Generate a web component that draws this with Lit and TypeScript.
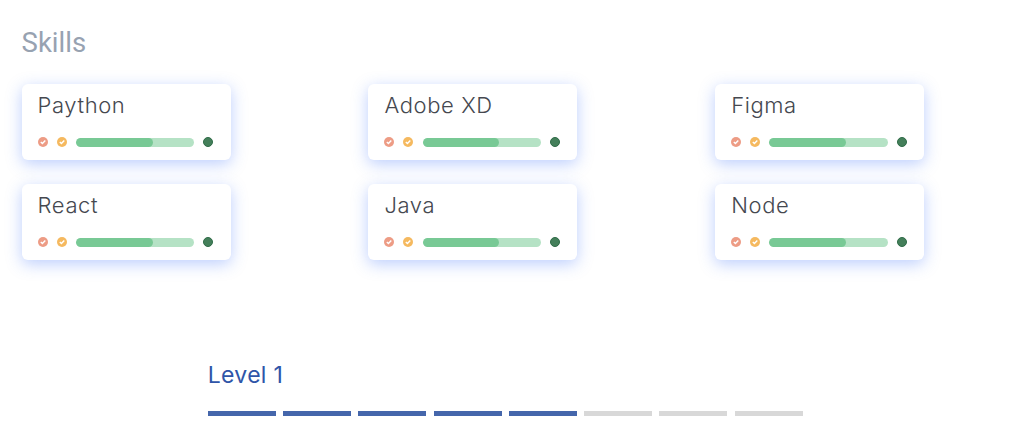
import { css, html, LitElement } from 'lit';

const SKILLS = ['Paython', 'Adobe XD', 'Figma', 'React', 'Java', 'Node'];
const SEGMENTS = [1, 1, 1, 1, 1, 0, 0, 0];

export class AppRoot extends LitElement {
  static styles = css`
    :host {
      display: block;
      height: 438px;
      overflow: hidden;
      background: #fff;
      font-family: 'Inter', 'Liberation Sans', sans-serif;
    }

    .skills {
      padding: 28px 0 0 21.6px;
    }

    .title {
      margin: 0;
      font-family: 'Roboto', sans-serif;
      font-size: 27.5px;
      font-weight: 400;
      line-height: 30px;
      color: #97a2b1;
    }

    .grid {
      display: grid;
      grid-template-columns: repeat(3, 209px);
      column-gap: 137.8px;
      row-gap: 24px;
      margin-top: 26px;
    }

    .card {
      box-sizing: border-box;
      height: 76px;
      padding: 7px 17.6px 0 16px;
      border-radius: 6px;
      background: #fff;
      box-shadow: 0 4px 16px rgba(60, 110, 250, 0.34);
    }

    .name {
      font-size: 22px;
      font-weight: 300;
      line-height: 28px;
      letter-spacing: 0.6px;
      color: #45484f;
    }

    .meter {
      display: flex;
      align-items: center;
      gap: 9px;
      margin-top: 18px;
    }

    .check {
      flex: none;
      width: 10px;
      height: 10px;
    }

    .bar {
      flex: 1;
      height: 9px;
      margin-left: 0.3px;
      border-radius: 5px;
      background: #b5e2c5;
      overflow: hidden;
    }

    .fill {
      height: 100%;
      border-radius: 5px;
      background: #78c995;
    }

    .dot {
      flex: none;
      box-sizing: border-box;
      width: 10px;
      height: 10px;
      border: 1px solid #2f6b47;
      border-radius: 50%;
      background: #447f5a;
    }

    .level {
      margin: 100px 0 0 207.8px;
    }

    .level-title {
      font-size: 23px;
      font-weight: 400;
      line-height: 30px;
      letter-spacing: 0.3px;
      color: #2f55a8;
    }

    .segments {
      display: flex;
      gap: 7.25px;
      margin-top: 21px;
    }

    .segment {
      width: 68px;
      height: 5px;
      background: #d8d8d8;
    }

    .segment.on {
      background: #4566ab;
    }
  `;

  private check(color: string) {
    return html`<svg class="check" viewBox="0 0 10 10">
      <circle cx="5" cy="5" r="5" fill=${color}></circle>
      <path d="M2.8 5.1 4.4 6.6 7.3 3.5" fill="none" stroke="#fff" stroke-width="1.4"></path>
    </svg>`;
  }

  render() {
    return html`
      <section class="skills">
        <h2 class="title">Skills</h2>
        <div class="grid">
          ${SKILLS.map(
            (name) => html`
              <div class="card">
                <div class="name">${name}</div>
                <div class="meter">
                  ${this.check('#ed9c85')} ${this.check('#f5b95f')}
                  <div class="bar"><div class="fill" style="width: 65%"></div></div>
                  <span class="dot"></span>
                </div>
              </div>
            `,
          )}
        </div>
      </section>
      <section class="level">
        <div class="level-title">Level 1</div>
        <div class="segments">
          ${SEGMENTS.map((on) => html`<span class="segment ${on ? 'on' : ''}"></span>`)}
        </div>
      </section>
    `;
  }
}

customElements.define('app-root', AppRoot);
